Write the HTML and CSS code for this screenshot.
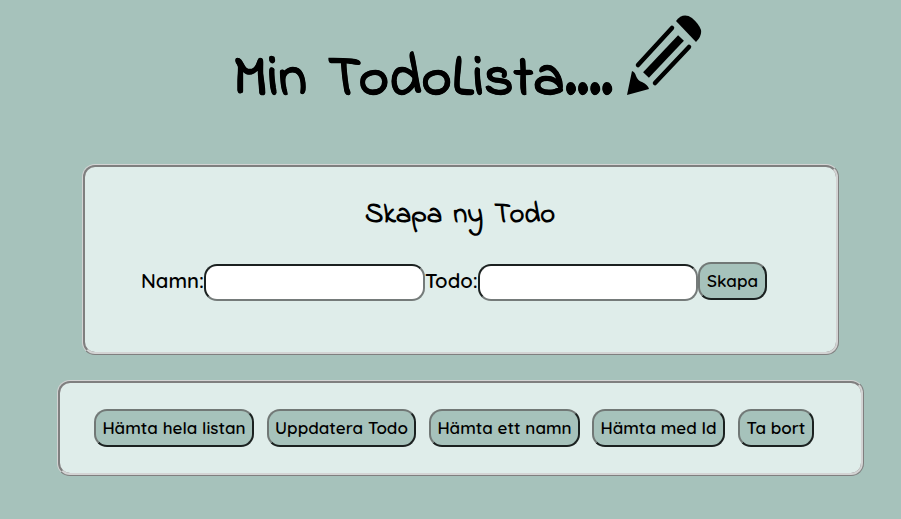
FILE: index.html
```html
<!DOCTYPE html>
<html lang="sv">
<head>
<meta charset="utf-8">
<title>Min TodoLista</title>
<link rel="stylesheet" href="styles.css">
</head>
<body>
<header class="header">
  <h1 class="title">Min TodoLista....</h1>
  <svg class="pencil" viewBox="0 0 76 82" aria-hidden="true">
    <path d="M1 81 L6 57 Q9 58 10 62 Q12 67 16 68 Q22 71 23 75 Z"/>
    <path d="M50 7 Q57 -2 66 4 Q73 10 75 16 Q76 22 70 28 Z"/>
    <path class="line" d="M12 51 L46 14 M29 69 L63 33"/>
    <path class="core" d="M20 61 L55 24"/>
  </svg>
</header>
<main>
  <section class="panel create">
    <h2 class="subtitle">Skapa ny Todo</h2>
    <form class="form">
      <label class="label-name" for="name">Namn:</label><input class="field" id="name" type="text">
      <label class="label-todo" for="todo">Todo:</label><input class="field" id="todo" type="text">
      <button class="btn b-create" type="button">Skapa</button>
    </form>
  </section>
  <section class="panel actions">
    <button class="btn b-all" type="button">Hämta hela listan</button>
    <button class="btn b-update" type="button">Uppdatera Todo</button>
    <button class="btn b-one" type="button">Hämta ett namn</button>
    <button class="btn b-id" type="button">Hämta med Id</button>
    <button class="btn b-delete" type="button">Ta bort</button>
  </section>
</main>
</body>
</html>
```
FILE: styles.css
```css
* { box-sizing: border-box; }
body {
  margin: 0;
  height: 519px;
  overflow: hidden;
  background: #a6c2bb;
  color: #000;
  font-family: Quicksand, Lato, sans-serif;
}
.header {
  display: flex;
  height: 164px;
  padding: 14px 0 0 233px;
}
.title {
  width: 393px;
  margin: 32px 0 0;
  font: 700 57px/70px "Indie Flower", Lato, cursive;
  letter-spacing: 0.5px;
  word-spacing: 6px;
  -webkit-text-stroke: 0.6px #000;
  white-space: nowrap;
}
.pencil { width: 76px; height: 82px; }
.line, .core { fill: none; stroke: #000; stroke-width: 4.5; stroke-linecap: round; }
.core { stroke-width: 8; stroke-linecap: butt; }
.panel {
  border: 3px ridge #d3d3d3;
  border-radius: 13px;
  background: #dfedea;
}
.create { width: 757px; height: 191px; margin-left: 82px; padding-top: 30px; }
.subtitle {
  margin: 0 0 0 280px;
  font: 700 28.5px/36px "Indie Flower", Lato, cursive;
  word-spacing: 4px;
}
.form {
  display: flex;
  align-items: center;
  margin: 29px 0 0 56px;
  font-size: 20.3px;
  font-weight: 600;
  height: 38px;
}
.label-name, .label-todo { margin-top: -2px; white-space: nowrap; }
.label-name { width: 63px; }
.label-todo { width: 53px; }
.field {
  width: 221px;
  height: 37px;
  margin-top: 2px;
  border: 2px solid;
  border-color: #1b2120 #757b7a #757b7a #1b2120;
  border-radius: 13px;
  background: #fff;
}
.field:last-of-type { width: 220px; }
.btn {
  height: 38px;
  padding: 0 0 2px;
  border: 2px solid;
  border-color: #717876 #1b2120 #1b2120 #717876;
  border-radius: 13px;
  background: #a6c2bb;
  color: #000;
  font: 600 17px Quicksand, Lato, sans-serif;
  white-space: nowrap;
}
.actions {
  display: flex;
  width: 807px;
  height: 96px;
  margin: 25px 0 0 57px;
  padding: 26px 0 0 34px;
}
.b-create { width: 69px; }
.b-all { width: 160px; margin-right: 13px; }
.b-update { width: 149px; margin-right: 13px; }
.b-one { width: 151px; margin-right: 12px; }
.b-id { width: 133px; margin-right: 13px; }
.b-delete { width: 76px; }
```
